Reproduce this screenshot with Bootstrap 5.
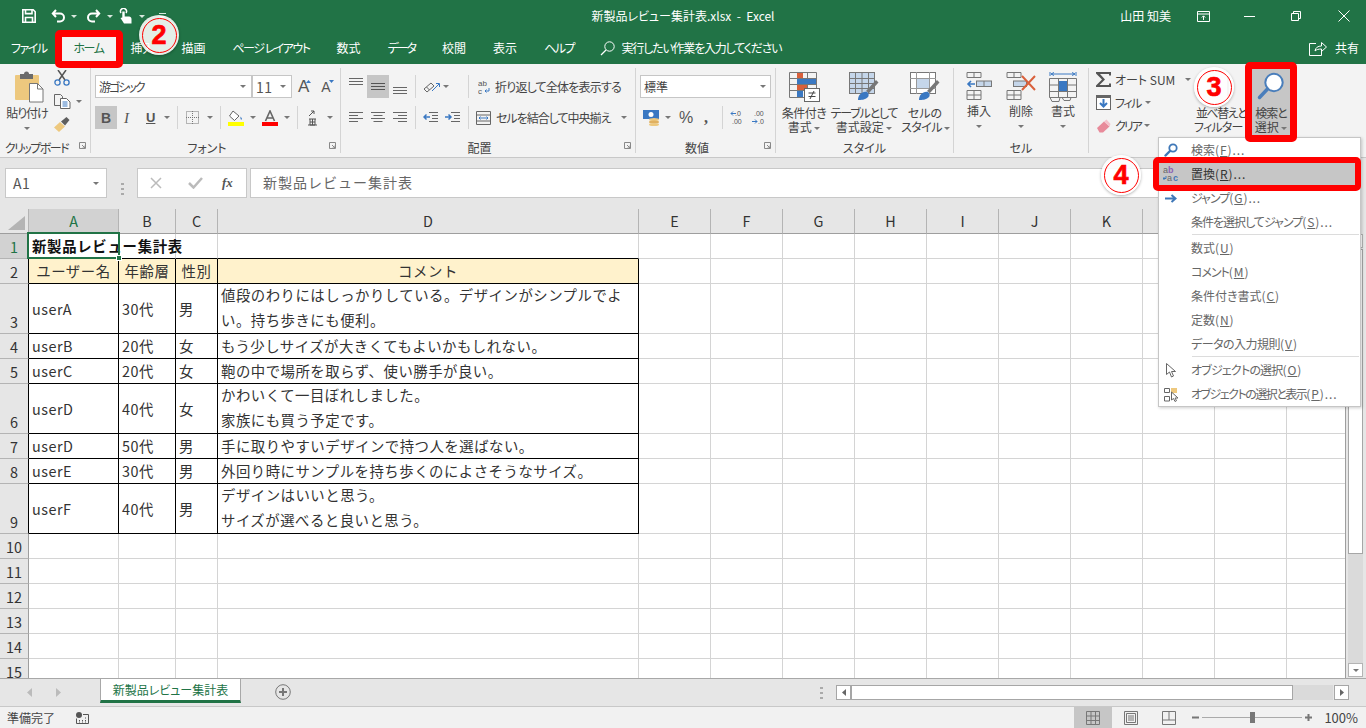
<!DOCTYPE html>
<html lang="ja">
<head>
<meta charset="utf-8">
<title>新製品レビュー集計表.xlsx - Excel</title>
<link href="https://cdn.jsdelivr.net/npm/bootstrap@5.3.0/dist/css/bootstrap.min.css" rel="stylesheet">
<style>
html,body{height:100%;margin:0;overflow:hidden;background:#e6e6e6}
body{font-family:"Noto Sans CJK JP","Liberation Sans",sans-serif}
.xl-app{position:relative;width:1366px;height:728px;overflow:hidden;font-size:12px;color:#444;font-feature-settings:"palt";line-height:14px;white-space:nowrap}
.xl-title{height:32px;background:#217346;color:#fff;flex:none}
.xl-tabs{height:32px;background:#217346;color:#fff;flex:none}
.xl-side{flex:1 1 0;min-width:0}
.xl-tab{padding:0 13.5px;line-height:32px;height:32px}
.xl-tab-first{padding-left:11px}
.xl-tab-on{background:#f3f3f3;color:#217346}
.ls05{letter-spacing:-.5px}.ls08{letter-spacing:-.8px}.ls1{letter-spacing:-1px}.ls12{letter-spacing:-1.2px}.ls15{letter-spacing:-1.5px}.ls2{letter-spacing:-2px}
.share-txt{margin-right:7px}
.xl-ribbon{height:94px;background:#f3f3f3;border-bottom:1px solid #c8c8c8;padding-top:4px;flex:none}
.rgroup{height:85px;border-right:1px solid #d4d4d4;flex:none}
.rg-clip{width:91px}.rg-font{width:250px;padding-left:4px}.rg-align{width:295px;padding-left:8px}.rg-num{width:140px;padding-left:4px}.rg-style{width:178px;padding-left:5px}.rg-cell{width:135px;padding-left:4px}.rg-edit{width:260px;padding-left:7px;border:0}
.rbody{flex:1 1 0;min-height:0}
.rlabel{height:12px;line-height:12px;margin-bottom:-1px;flex:none;margin-left:-8px}
.rg-clip .rlabel{margin-left:0}.rg-font .rlabel{margin-left:-4px}.rg-num .rlabel{margin-left:-4px}.rg-style .rlabel{margin-left:-5px}.rg-cell .rlabel{margin-left:-4px}
.rlabel-txt{flex:1 1 0;text-align:center}
.launch{margin:0 4px 0 6px;flex:none}
.trow{height:23px;flex:none}
.trow1{margin-top:7px}.trow2{margin-top:8px}
.tile{width:22px;height:23px;flex:none;background:#c6c6c6}
.tsep{width:1px;height:23px;background:#d4d4d4;flex:none}
.crt{width:0;height:0;flex:none;border-left:3px solid transparent;border-right:3px solid transparent;border-top:3px solid #777;display:inline-block;vertical-align:2px}
.crt-w{border-top-color:#d8e8de}
.cbox{height:23px;background:#fff;border:1px solid #c6c6c6;flex:none;padding:0 5px 0 3px}
.cb-font{width:157px}.cb-size{width:40px}.cb-num{width:131px;padding-right:4px}
.sz-num{font-size:14px;color:#555;letter-spacing:.5px;font-feature-settings:normal}
.glyph-a{font-size:17px;line-height:20px;color:#555;font-family:"Liberation Sans",sans-serif}
.glyph-a2{font-size:14px;line-height:20px;color:#555;font-family:"Liberation Sans",sans-serif}
.tri-up{margin:-11px 0 0 -3px;flex:none}
.tri-dn{margin:-11px 0 0 -2px;flex:none}
.glyph-b{font-weight:700;font-size:14px;color:#555;font-family:"Liberation Sans",sans-serif}
.glyph-i{font-style:italic;font-size:15px;color:#555;font-family:"Liberation Serif",serif;width:7px}
.glyph-u{font-weight:700;font-size:13px;color:#555;text-decoration:underline;width:8px;font-family:"Liberation Sans",sans-serif}
.glyph-pct{font-size:16px;color:#555;width:13px;font-family:"Liberation Sans",sans-serif}
.glyph-com{font-size:16px;font-weight:700;color:#555;width:4px;font-family:"Liberation Serif",serif}
.al-top{margin-bottom:9px}.al-bot{margin-top:9px}
.merge-txt{width:116px;flex:none}
.paste-col{width:54px;flex:none;text-align:center;padding-top:3px}
.paste-ico{display:block;margin:0 0 3px 15px}
.tool-col{padding-top:2px}
.copy-row{margin-top:8px}
.brush-ico{margin-top:8px}
.bigbtn{flex:none;text-align:center;padding-top:4px}
.bb-1{width:46px}.bb-2{width:74px}.bb-3{width:48px}.bb-c{width:42px}.bb-sort{width:54px}.bb-find{width:38px;height:67px;background:#c6c6c6;margin-left:4px}
.bigbtn svg{display:block;margin:0 auto 4px}
.bigbtn .svg-tall{margin-bottom:2px}
.bb-find svg{margin-bottom:6px}
.crtline{line-height:14px;height:14px}
.editcol{width:98px;flex:none}
.erow{height:23px}
.l1{margin-left:1px}.l3{margin-left:3px}.l4{margin-left:4px}.l5{margin-left:5px}.l6{margin-left:6px}.l7{margin-left:7px}.l8{margin-left:8px}.l9{margin-left:9px}.l10{margin-left:10px}.l12{margin-left:12px}.l14{margin-left:14px}.l15{margin-left:15px}.l19{margin-left:19px}.l22{margin-left:22px}.l26{margin-left:26px}.l34{margin-left:34px}.l36{margin-left:36px}.l37{margin-left:37px}
.xl-fbar{height:51px;background:#e6e6e6;padding:10px 0 0 5px;flex:none}
.fbox{height:30px;background:#fff;border:1px solid #c8c8c8;flex:none}
.fb-name{width:102px;padding:0 7px;font-size:14px;color:#555;letter-spacing:.6px;font-feature-settings:normal}
.fb-dots{width:30px}
.fb-btn{width:110px;padding-left:12px}
.fb-input{width:1102px;margin-left:3px;padding:0 0 3px 12px;font-size:14px;letter-spacing:1px;color:#666;font-feature-settings:normal}
.fxt{font-family:"Liberation Serif",serif;font-style:italic;font-weight:700;font-size:13px;color:#555}
.xl-grid{flex:1 1 0;min-height:0}
.sheetwrap{width:1345px;flex:none;overflow:hidden;background:#fff;position:relative}
.xl-sheet{table-layout:fixed;width:1359px;border-collapse:separate;border-spacing:0;--bs-table-bg:transparent;font-size:14.4px;color:#333;font-feature-settings:normal;line-height:23px;letter-spacing:.5px}
.xl-sheet td,.xl-sheet th{padding:0 3px 1px;border:0;border-right:1px solid #d4d4d4;border-bottom:1px solid #d4d4d4;white-space:nowrap;font-weight:400;box-shadow:none;vertical-align:middle}
.twoln{line-height:25px;margin:-3px 0 -1px}
.c-rh{width:29px}.c-a{width:90px}.c-b{width:57px}.c-c{width:42px}.c-d{width:421px}.c-x{width:72px}
.rh-s{height:25px}.rh-d{height:50px}.rh-h{height:25px}
.xl-sheet th.hd{background:#e6e6e6;border-right:1px solid #b4b4b4;border-bottom:1px solid #9e9e9e;text-align:center;color:#333;padding:0;letter-spacing:0;line-height:24px;height:25px}
.corner-ico{display:block}
.xl-sheet th.rn{background:#e6e6e6;border-right:1px solid #9e9e9e;border-bottom:1px solid #b4b4b4;text-align:center;color:#333;padding:0;letter-spacing:0;vertical-align:bottom;line-height:23px}
.xl-sheet th.sel{background:#d2d2d2;color:#217346}
.xl-sheet th.rn-b{border-right-color:#000}
.xl-sheet td.bx{border-right-color:#000;border-bottom-color:#000}
.xl-sheet td.hdr{background:#fff2cc;text-align:center;letter-spacing:.6px}
.xl-sheet td.ttl{font-weight:700;position:relative;padding-left:3px;border-bottom-color:#000;border-right-color:transparent;letter-spacing:.7px;color:#111}
.xl-sheet td.bbk{border-bottom-color:#000}
.sel-box{position:absolute;left:-2px;top:-2px;width:93px;height:27px;border:2px solid #217346;pointer-events:none}
.sel-hdl{position:absolute;right:-4px;bottom:-4px;width:6px;height:6px;background:#217346;border:1px solid #fff}
.vbar{width:21px;flex:none;background:#e6e6e6;border-left:1px solid #9e9e9e;padding:25px 3px 1px 2px}
.vbtn{height:14px;background:#fff;border:1px solid #b4b4b4;flex:none}
.vthumb{height:305px;background:#fff;border:1px solid #a6a6a6;flex:none;margin-top:1px}
.vtrack{flex:1 1 0;background:#dadada}
.xl-sheetbar{height:28px;background:#e6e6e6;border-top:1px solid #a8a8a8;flex:none}
.sheet-arrows{width:100px;padding-left:27px;flex:none}
.arrow-next{margin-left:24px}
.sheet-tab{width:141px;height:25px;margin-top:-1px;background:#fff;border:1px solid #a8a8a8;border-bottom:3px solid #217346;text-align:center;line-height:21px;color:#217346;flex:none}
.plus-slot{margin-left:34px;flex:none;margin-top:-1px}
.dots-slot{margin-left:529px;flex:none}
.hbar{margin-left:13px;flex:none}
.hbtn{width:15px;height:15px;background:#fff;border:1px solid #a6a6a6;flex:none}
.hthumb{width:442px;height:15px;background:#fff;border:1px solid #a6a6a6;flex:none}
.htrack{width:40px;height:15px;background:#dadada;flex:none}
.xl-status{height:22px;background:#f1f1f1;border-top:1px solid #c8c8c8;flex:none;padding-left:7px}
.status-ico{margin-left:21px}
.zoom-ico{margin-left:4px}
.st-active{width:38px;height:21px;background:#c6c6c6;flex:none}
.st-view{width:38px;height:21px;flex:none}
.st-pct{font-size:13px;color:#444;margin-left:12px;font-feature-settings:normal}
.find-menu.dropdown-menu{position:absolute;left:1158px;top:137px;width:203px;height:270px;padding:0;margin:0;min-width:0;border:1px solid #c6c6c6;border-radius:0;background:#fff;box-shadow:1px 1px 3px rgba(0,0,0,.2);font-size:12px;z-index:5}
.find-item{display:flex;align-items:center;height:24px;padding:0;color:#666;font-size:12px;line-height:24px}
.find-item.on{background:#c6c6c6;color:#333}
.find-ico{width:24px;flex:none;display:flex;justify-content:center;align-items:center;margin-right:8px}
.find-acc{letter-spacing:.9px}
.find-sep{height:2px;margin:0 1px 0 33px;border-top:1px solid #dcdcdc;opacity:1}
.red-mark{position:absolute;border:7px solid #f00;border-radius:5px;z-index:6;pointer-events:none}
.rm-home{left:55px;top:30px;width:68px;height:38px}
.rm-find{left:1245px;top:62px;width:52px;height:80px}
.rm-repl{left:1153px;top:157px;width:208px;height:34px;border-width:6px}
.step-mark{position:absolute;width:40px;height:40px;background:rgba(255,255,255,.88);box-shadow:0 1px 3px rgba(0,0,0,.3);z-index:7}
.step-ring{width:35px;height:35px;border:1.5px solid #f00;color:#f00;font:700 27px/1 "Liberation Sans",sans-serif;-webkit-text-stroke:.7px #f00}
.sm-2{left:139px;top:15px}.sm-3{left:1194px;top:67px}.sm-4{left:1101px;top:155px}
</style>
</head>
<body>
<div class="xl-app d-flex flex-column">

  <div class="xl-title d-flex align-items-center">
    <div class="xl-side d-flex align-items-center">
      <svg class="l22" width="14" height="14" viewBox="0 0 14 14" fill="none" stroke="#fff"><path stroke-width="1.6" d="M.8.8h10.400l2 2v10.400H.8z"/><path stroke-width="1.6" d="M3.500 1v3.600h6.500V1M3.500 13V8.500h7V13"/></svg>
      <svg class="l15" width="15" height="14" viewBox="0 0 15 14" fill="none" stroke="#fff" stroke-width="2"><path d="M5 1 1.800 4.500 5 8M2 4.500h7a4 4 0 0 1 0 8H6"/></svg>
      <span class="crt crt-w l5"></span>
      <svg class="l9" width="15" height="14" viewBox="0 0 15 14" fill="none" stroke="#fff" stroke-width="2"><path d="M10 1l3.200 3.500L10 8M13 4.500H6a4 4 0 0 0 0 8h3"/></svg>
      <span class="crt crt-w l6"></span>
      <svg class="l6" width="13" height="16" viewBox="0 0 13 16"><path fill="none" stroke="#fff" stroke-width="1.500" d="M2 5a3 3 0 1 1 5 0"/><path fill="#fff" d="M3.300 3.500h2.400v5H10c1.500 0 2.500 1 2.500 2.500v4.500H5L1.500 10l1.800-.5z"/></svg>
      <span class="crt crt-w l7"></span>
      <svg class="l14" width="7" height="6" viewBox="0 0 7 6"><path stroke="#d8e8de" d="M0 .5h7"/><path fill="#d8e8de" d="M0 3h7L3.500 6z"/></svg>
    </div>
    <div class="flex-shrink-0 text-white">新製品レビュー集計表.xlsx&nbsp; - &nbsp;Excel</div>
    <div class="xl-side d-flex align-items-center justify-content-end">
      <span class="text-white">山田 知美</span>
      <svg class="l26" width="13" height="11" viewBox="0 0 13 11" fill="none" stroke="#fff"><path d="M.5.500h12v10H.5zM.5 3h12M6.500 9V5M4.800 6.500l1.700-1.700 1.700 1.700"/></svg>
      <svg class="l34" width="11" height="1" viewBox="0 0 11 1"><path stroke="#fff" d="M0 .5h11"/></svg>
      <svg class="l36" width="10" height="10" viewBox="0 0 10 10" fill="none" stroke="#fff"><path d="M.5 2.500h7v7h-7zM2.500 2.500v-2h7v7h-2"/></svg>
      <svg class="l37 me-3" width="12" height="12" viewBox="0 0 12 12" stroke="#fff"><path d="M.5.500l11 11M11.500.5l-11 11"/></svg>
    </div>
  </div>

  <div class="xl-tabs d-flex align-items-center">
    <div class="xl-tab xl-tab-first ls15">ファイル</div>
    <div class="xl-tab xl-tab-on ls15">ホーム</div>
    <div class="xl-tab">挿入</div>
    <div class="xl-tab">描画</div>
    <div class="xl-tab ls15">ページ レイアウト</div>
    <div class="xl-tab">数式</div>
    <div class="xl-tab ls2">データ</div>
    <div class="xl-tab">校閲</div>
    <div class="xl-tab">表示</div>
    <div class="xl-tab ls15">ヘルプ</div>
    <svg class="l12" width="15" height="15" viewBox="0 0 15 15" fill="none" stroke="#fff"><circle cx="9.500" cy="5.500" r="4.700"/><path stroke-width="1.300" d="M6 9 1 14"/></svg>
    <span class="l7 ls12">実行したい作業を入力してください</span>
    <div class="xl-side d-flex justify-content-end align-items-center">
      <svg width="18" height="15" viewBox="0 0 18 15" fill="none" stroke="#fff"><path d="M7 2.500H.5v12h12V10M6 10c.5-3.500 3-5 6.500-5V1.500L17.500 6l-5 4.500V8C9.500 8 7.500 8.500 6 10z"/></svg>
      <span class="l8 share-txt">共有</span>
    </div>
  </div>

  <div class="xl-ribbon d-flex">
    <!-- clipboard -->
    <div class="rgroup rg-clip d-flex flex-column">
      <div class="rbody d-flex">
        <div class="paste-col">
          <svg class="paste-ico" width="29" height="32" viewBox="0 0 29 32"><rect y="4" width="24" height="25" rx="1" fill="#edc87e"/><rect x="5" y="3" width="13" height="5" fill="#6b6b6b"/><circle cx="11.500" cy="3" r="2.500" fill="#6b6b6b"/><path d="M14.500 12.500h8l5.500 5.500v13H14.500z" fill="#fff" stroke="#777"/><path d="M22.500 12.500V18H28" fill="none" stroke="#777"/></svg>
          <div class="ls1">貼り付け</div>
          <div class="crtline"><span class="crt"></span></div>
        </div>
        <div class="d-flex flex-column tool-col">
          <svg width="16" height="16" viewBox="0 0 16 16" fill="none"><path stroke="#555" stroke-width="1.500" d="M4 0l7 10M12 0 5 10"/><circle cx="3.500" cy="12.500" r="2.600" stroke="#3a78c2" stroke-width="1.300"/><circle cx="12.500" cy="12.500" r="2.600" stroke="#3a78c2" stroke-width="1.300"/></svg>
          <div class="d-flex align-items-center copy-row">
            <svg width="17" height="15" viewBox="0 0 17 15" fill="none" stroke="#666"><path d="M.5.500h6l2 2v9H.500z" fill="#f3f3f3"/><path d="M6.500 4.500h6l3.500 3.500v6.500H6.500z" fill="#fff"/><path stroke="#3a78c2" d="M8.500 8h5M8.500 10h5M8.500 12h5"/></svg>
            <span class="crt l5"></span>
          </div>
          <svg class="brush-ico" width="16" height="15" viewBox="0 0 16 15"><path fill="#edc87e" d="M0 10.500 6 5l5 4.500L5 15z"/><path fill="#5e5e5e" d="M7 4.500 12.500 0 15.500 3 11 8.500z"/></svg>
        </div>
      </div>
      <div class="rlabel d-flex"><span class="rlabel-txt ls15">クリップボード</span><svg class="launch" width="7" height="7" viewBox="0 0 7 7" fill="none" stroke="#888"><path d="M.5 6.500v-6h6v6zM3 3l3 3M6 3.500V6H3.500"/></svg></div>
    </div>
    <!-- font -->
    <div class="rgroup rg-font d-flex flex-column">
      <div class="rbody">
        <div class="trow trow1 d-flex align-items-center">
          <div class="cbox cb-font d-flex align-items-center justify-content-between"><span class="ls2">游ゴシック</span><span class="crt"></span></div>
          <div class="cbox cb-size d-flex align-items-center justify-content-between"><span class="sz-num">11</span><span class="crt"></span></div>
          <span class="glyph-a l6">A</span>
          <svg class="tri-up" width="5" height="3" viewBox="0 0 5 3"><path fill="#3a78c2" d="M2.500 0 5 3H0z"/></svg>
          <span class="glyph-a2 l10">A</span>
          <svg class="tri-dn" width="5" height="3" viewBox="0 0 5 3"><path fill="#3a78c2" d="M0 0h5L2.500 3z"/></svg>
        </div>
        <div class="trow trow2 d-flex align-items-center">
          <div class="tile d-flex align-items-center justify-content-center"><span class="glyph-b">B</span></div>
          <span class="glyph-i l7">I</span>
          <span class="glyph-u l15">U</span>
          <span class="crt l10"></span>
          <span class="tsep l7"></span>
          <svg class="l8" width="13" height="13" viewBox="0 0 13 13" fill="none" stroke="#777" stroke-dasharray="1 1"><path d="M.5.500h12v12H.5zM6.500 0v13M0 6.500h13"/></svg>
          <span class="crt l8"></span>
          <span class="tsep l7"></span>
          <svg class="l7" width="16" height="16" viewBox="0 0 16 16"><path d="M5 1 1.500 6 6.500 10.500 11 6z" fill="#fff" stroke="#666"/><path d="M12.500 6.500c1.200 1.500 1.800 2.400 1.200 3-.7.500-1.500-.2-1.200-3z" fill="#3a78c2"/><rect y="12" width="16" height="4" fill="#ffff00"/></svg>
          <span class="crt l6"></span>
          <svg class="l6" width="16" height="16" viewBox="0 0 16 16"><path d="M3.500 11 8 1l4.500 10M5 8h6" fill="none" stroke="#666" stroke-width="1.600"/><rect y="12" width="16" height="4" fill="#f00"/></svg>
          <span class="crt l6"></span>
          <span class="tsep l7"></span>
          <svg class="l10" width="9" height="16" viewBox="0 0 9 16" fill="none" stroke="#555"><path d="M1 6 6 1M3 1h3v3M1 9h7M2 9v6h5V9M2 12h5M4.500 9v6M0 15h9"/></svg>
          <span class="crt l10"></span>
        </div>
      </div>
      <div class="rlabel d-flex"><span class="rlabel-txt">フォント</span><svg class="launch" width="7" height="7" viewBox="0 0 7 7" fill="none" stroke="#888"><path d="M.5 6.500v-6h6v6zM3 3l3 3M6 3.500V6H3.500"/></svg></div>
    </div>
    <!-- align -->
    <div class="rgroup rg-align d-flex flex-column">
      <div class="rbody">
        <div class="trow trow1 d-flex align-items-center">
          <svg class="al-top" width="14" height="8" viewBox="0 0 14 8" stroke="#666"><path d="M0 .5h14M0 3.500h14M0 6.500h14"/></svg>
          <div class="tile l4 d-flex align-items-center justify-content-center"><svg width="14" height="7" viewBox="0 0 14 7" stroke="#555"><path d="M0 .5h14M0 3.500h14M0 6.500h14"/></svg></div>
          <svg class="l4 al-bot" width="14" height="8" viewBox="0 0 14 8" stroke="#666"><path d="M0 .5h14M0 3.500h14M0 6.500h14"/></svg>
          <span class="tsep l8"></span>
          <svg class="l7" width="17" height="14" viewBox="0 0 17 14" fill="none" stroke="#666"><path d="M1 9l7-6 3 3-7 6zM3.500 7l3 3"/><path stroke="#3a78c2" d="M9 11l7-7M13 3.500h3.500V7"/></svg>
          <span class="crt l3"></span>
          <span class="tsep l19"></span>
          <svg class="l9" width="12" height="14" viewBox="0 0 12 14"><text x="0" y="6" font-size="8" fill="#555" font-family="Liberation Sans">ab</text><text x="0" y="14" font-size="8" fill="#555" font-family="Liberation Sans">c</text><path d="M11 8v3H7M8.500 9.500 7 11l1.500 1.500" fill="none" stroke="#3a78c2"/></svg>
          <span class="l5 ls08">折り返して全体を表示する</span>
        </div>
        <div class="trow trow2 d-flex align-items-center">
          <svg width="14" height="11" viewBox="0 0 14 11" stroke="#666"><path d="M0 .5h14M0 3.500h9M0 6.500h14M0 9.500h9"/></svg>
          <svg class="l8" width="14" height="11" viewBox="0 0 14 11" stroke="#666"><path d="M0 .5h14M2.500 3.500h9M0 6.500h14M2.500 9.500h9"/></svg>
          <svg class="l8" width="14" height="11" viewBox="0 0 14 11" stroke="#666"><path d="M0 .5h14M5 3.500h9M0 6.500h14M5 9.500h9"/></svg>
          <span class="tsep l8"></span>
          <svg class="l7" width="15" height="11" viewBox="0 0 15 11" stroke="#666" fill="none"><path d="M6 .5h9M9 3.500h6M9 6.500h6M6 9.500h9"/><path stroke="#3a78c2" stroke-width="1.500" d="M7 5H1M3.500 2.500 1 5l2.500 2.500"/></svg>
          <svg class="l7" width="15" height="11" viewBox="0 0 15 11" stroke="#666" fill="none"><path d="M6 .5h9M9 3.500h6M9 6.500h6M6 9.500h9"/><path stroke="#3a78c2" stroke-width="1.500" d="M0 5h6M3.500 2.500 6 5 3.500 7.500"/></svg>
          <span class="tsep l8"></span>
          <svg class="l7" width="15" height="14" viewBox="0 0 15 14" fill="none" stroke="#666"><path d="M.5.500h14v13H.5zM0 4h15M0 10h15"/><path stroke="#3a78c2" d="M3 7h9M4.500 5.500 3 7l1.500 1.500M10.500 5.500 12 7l-1.500 1.500"/></svg>
          <span class="l5 merge-txt ls1">セルを結合して中央揃え</span>
          <span class="crt l9"></span>
        </div>
      </div>
      <div class="rlabel d-flex"><span class="rlabel-txt">配置</span><svg class="launch" width="7" height="7" viewBox="0 0 7 7" fill="none" stroke="#888"><path d="M.5 6.500v-6h6v6zM3 3l3 3M6 3.500V6H3.500"/></svg></div>
    </div>
    <!-- number -->
    <div class="rgroup rg-num d-flex flex-column">
      <div class="rbody">
        <div class="trow trow1 d-flex">
          <div class="cbox cb-num d-flex align-items-center justify-content-between"><span>標準</span><span class="crt"></span></div>
        </div>
        <div class="trow trow2 d-flex align-items-center">
          <svg class="l3" width="17" height="16" viewBox="0 0 17 16"><rect width="16" height="9" fill="#3a78c2"/><circle cx="8" cy="4.500" r="2.500" fill="#fff"/><ellipse cx="11" cy="9.500" rx="5" ry="1.500" fill="#edc87e"/><ellipse cx="11" cy="12" rx="5" ry="1.500" fill="#e0b060"/><ellipse cx="11" cy="14.500" rx="5" ry="1.500" fill="#edc87e"/></svg>
          <span class="crt l5"></span>
          <span class="glyph-pct l8">%</span>
          <span class="glyph-com l12">,</span>
          <span class="tsep l14"></span>
          <svg class="l7" width="14" height="15" viewBox="0 0 14 15"><text x="5" y="6" font-size="7" fill="#555" font-family="Liberation Sans">.0</text><text x="2" y="14" font-size="7" fill="#555" font-family="Liberation Sans">.00</text><path stroke="#3a78c2" fill="none" d="M6 3.500H1M3 1.500l-2 2 2 2"/></svg>
          <svg class="l8" width="14" height="15" viewBox="0 0 14 15"><text x="2" y="6" font-size="7" fill="#555" font-family="Liberation Sans">.00</text><text x="6" y="14" font-size="7" fill="#555" font-family="Liberation Sans">.0</text><path stroke="#3a78c2" fill="none" d="M0 11.500h5M3 9.500l2 2-2 2"/></svg>
        </div>
      </div>
      <div class="rlabel d-flex"><span class="rlabel-txt">数値</span><svg class="launch" width="7" height="7" viewBox="0 0 7 7" fill="none" stroke="#888"><path d="M.5 6.500v-6h6v6zM3 3l3 3M6 3.500V6H3.500"/></svg></div>
    </div>
    <!-- styles -->
    <div class="rgroup rg-style d-flex flex-column">
      <div class="rbody d-flex">
        <div class="bigbtn bb-1">
          <svg width="31" height="30" viewBox="0 0 31 30" fill="none"><path stroke="#777" d="M.5.500h27v25H.5zM0 6.500h28M0 12.500h28M0 18.500h28M8.500 0v26M18.500 0v26"/><rect x="8" y="1" width="6" height="5" fill="#d9603b"/><rect x="8" y="7" width="19" height="5" fill="#3a78c2"/><rect x="8" y="13" width="10" height="5" fill="#d9603b"/><rect x="8" y="19" width="6" height="6" fill="#3a78c2"/><rect x="15.500" y="16.500" width="15" height="13" fill="#fff" stroke="#666"/><path stroke="#444" d="M19.500 21h7M19.500 24.500h7M25 19l-4 8"/></svg>
          <div class="ls05">条件付き</div>
          <div class="crtline">書式 <span class="crt"></span></div>
        </div>
        <div class="bigbtn bb-2">
          <svg width="30" height="30" viewBox="0 0 30 30" fill="none"><rect x=".5" y=".5" width="25" height="21" fill="#c5d6ea" stroke="#777"/><path stroke="#777" d="M0 6.500h26M0 11.500h26M0 16.500h26M6.500 0v22M13 0v22M19.500 0v22"/><path d="M17 19 27 8l2.500 2.500L20 21z" fill="#777"/><path d="M9 28c0-5 4-9 9-8 2 1 2 4 1 5-3 3-7 3-10 3z" fill="#3a78c2"/></svg>
          <div class="ls12">テーブルとして</div>
          <div class="crtline">書式設定 <span class="crt"></span></div>
        </div>
        <div class="bigbtn bb-3">
          <svg width="30" height="30" viewBox="0 0 30 30" fill="none"><rect x=".5" y=".5" width="25" height="21" fill="#fff" stroke="#777"/><path stroke="#999" d="M0 6.500h26M0 16.500h26M6.500 0v22M19.500 0v22"/><rect x="7" y="7" width="12" height="9" fill="#c5d6ea"/><path d="M17 19 27 8l2.500 2.500L20 21z" fill="#777"/><path d="M9 28c0-5 4-9 9-8 2 1 2 4 1 5-3 3-7 3-10 3z" fill="#3a78c2"/></svg>
          <div>セルの</div>
          <div class="crtline ls05">スタイル <span class="crt"></span></div>
        </div>
      </div>
      <div class="rlabel d-flex"><span class="rlabel-txt">スタイル</span></div>
    </div>
    <!-- cells -->
    <div class="rgroup rg-cell d-flex flex-column">
      <div class="rbody d-flex">
        <div class="bigbtn bb-c">
          <svg width="26" height="28" viewBox="0 0 26 28" fill="none" stroke="#777"><path d="M1 .5h14v5H1zM8 0v6M1 18.500h14v9H1zM8 18v10M1 23h14"/><rect x="10.500" y="9" width="15" height="5.500" fill="#c5d6ea"/><path d="M18 9v6"/><path stroke="#3a78c2" stroke-width="1.600" d="M9 12H2M5 9l-3 3 3 3"/></svg>
          <div>挿入</div>
          <div class="crtline"><span class="crt"></span></div>
        </div>
        <div class="bigbtn bb-c">
          <svg width="30" height="28" viewBox="0 0 30 28" fill="none" stroke="#777"><path d="M1 .5h14v5H1zM8 0v6M1 18.500h14v9H1zM8 18v10M1 23h14"/><rect x="7.500" y="9" width="13" height="5.500" fill="#c5d6ea"/><path stroke="#d9603b" stroke-width="2" d="M16 4l13 14M29 4 16 18"/></svg>
          <div>削除</div>
          <div class="crtline"><span class="crt"></span></div>
        </div>
        <div class="bigbtn bb-c">
          <svg class="svg-tall" width="28" height="30" viewBox="0 0 28 30" fill="none" stroke="#777"><path stroke="#3a78c2" d="M1 0v4M27 0v4M2 2h24M5 .5 2 2l3 1.500M23 .5 26 2l-3 1.500"/><path d="M.5 6.500h27v19H.5zM0 13h28M0 19.500h28M9.500 6v20M18.500 6v20"/><rect x="10" y="9" width="8" height="10" fill="#3a78c2" stroke="none"/><path d="M1 25.500l2 4h7l1-4M13 25.500l2 3h6l1-3"/></svg>
          <div>書式</div>
          <div class="crtline"><span class="crt"></span></div>
        </div>
      </div>
      <div class="rlabel d-flex"><span class="rlabel-txt">セル</span></div>
    </div>
    <!-- edit -->
    <div class="rgroup rg-edit d-flex">
      <div class="editcol">
        <div class="erow d-flex align-items-center"><svg width="16" height="15" viewBox="0 0 16 15"><path fill="#555" d="M0 0h15v3.500h-2V2H4l5 5.500L3.500 13H13v-1.500h2V15H0v-1.500L6 7.500 0 1.500z"/></svg><span class="l3">オート SUM</span><span class="crt l10"></span></div>
        <div class="erow d-flex align-items-center"><svg width="16" height="15" viewBox="0 0 16 15" fill="none"><rect x=".5" y=".5" width="14" height="14" fill="#fff" stroke="#666"/><rect width="15" height="3" fill="#666"/><path stroke="#3a78c2" stroke-width="2" d="M7.500 4v7M4 8l3.500 3.500L11 8"/></svg><span class="l3 ls15">フィル</span><span class="crt l4"></span></div>
        <div class="erow d-flex align-items-center"><svg width="16" height="14" viewBox="0 0 16 14"><path fill="#e88a9a" d="M1 9 8 2.500 13.500 7.500 7 13.500H3.500z"/><path fill="#f4c1cb" d="M8 2.500 10.500.5 14.500 5l-1 2.500z"/></svg><span class="l3 ls2">クリア</span><span class="crt l3"></span></div>
      </div>
      <div class="bigbtn bb-sort">
        <svg width="26" height="30" viewBox="0 0 26 30" fill="none" stroke="#777"><path d="M3 4v20M20 24V4"/></svg>
        <div class="ls15">並べ替えと</div>
        <div class="crtline"><span class="ls08">フィルター</span> <span class="crt"></span></div>
      </div>
      <div class="bigbtn bb-find">
        <svg width="28" height="28" viewBox="0 0 28 28" fill="none"><circle cx="17" cy="10.500" r="8.700" fill="#fff" stroke="#4a7ebb" stroke-width="2"/><path stroke="#4a7ebb" stroke-width="3.500" stroke-linecap="round" d="M10.500 17 2.500 25.500"/></svg>
        <div class="ls1">検索と</div>
        <div class="crtline">選択 <span class="crt"></span></div>
      </div>
    </div>
  </div>

  <div class="xl-fbar d-flex">
    <div class="fbox fb-name d-flex align-items-center justify-content-between"><span>A1</span><span class="crt"></span></div>
    <div class="fb-dots d-flex align-items-center justify-content-center"><svg width="3" height="12" viewBox="0 0 3 12" fill="#aaa"><rect width="3" height="2"/><rect y="5" width="3" height="2"/><rect y="10" width="3" height="2"/></svg></div>
    <div class="fbox fb-btn d-flex align-items-center">
      <svg width="12" height="12" viewBox="0 0 12 12" stroke="#bbb" stroke-width="1.500"><path d="M1 1l10 10M11 1 1 11"/></svg>
      <svg class="l26" width="15" height="12" viewBox="0 0 15 12" fill="none" stroke="#bbb" stroke-width="2.500"><path d="M1 6l4.500 4.500L14 1"/></svg>
      <span class="fxt l19">fx</span>
    </div>
    <div class="fbox fb-input d-flex align-items-center">新製品レビュー集計表</div>
  </div>

  <div class="xl-grid d-flex">
    <div class="sheetwrap">
      <table class="table mb-0 xl-sheet">
        <colgroup><col class="c-rh"><col class="c-a"><col class="c-b"><col class="c-c"><col class="c-d"><col class="c-x"><col class="c-x"><col class="c-x"><col class="c-x"><col class="c-x"><col class="c-x"><col class="c-x"><col class="c-x"><col class="c-x"><col class="c-x"></colgroup>
        <thead>
          <tr class="rh-h"><th class="hd"><svg class="corner-ico" width="28" height="24" viewBox="0 0 28 24"><path fill="#b4b4b4" d="M25 7v14H8z"/></svg></th><th class="hd sel">A</th><th class="hd">B</th><th class="hd">C</th><th class="hd">D</th><th class="hd">E</th><th class="hd">F</th><th class="hd">G</th><th class="hd">H</th><th class="hd">I</th><th class="hd">J</th><th class="hd">K</th><th class="hd">L</th><th class="hd">M</th><th class="hd">N</th></tr>
        </thead>
        <tbody>
          <tr class="rh-s"><th class="rn sel">1</th><td class="ttl">新製品レビュー集計表<span class="sel-box"><span class="sel-hdl"></span></span></td><td class="bbk"></td><td class="bbk"></td><td class="bbk"></td><td></td><td></td><td></td><td></td><td></td><td></td><td></td><td></td><td></td><td></td></tr>
          <tr class="rh-s"><th class="rn rn-b">2</th><td class="bx hdr">ユーザー名</td><td class="bx hdr">年齢層</td><td class="bx hdr">性別</td><td class="bx hdr">コメント</td><td></td><td></td><td></td><td></td><td></td><td></td><td></td><td></td><td></td><td></td></tr>
          <tr class="rh-d"><th class="rn rn-b">3</th><td class="bx">userA</td><td class="bx">30代</td><td class="bx">男</td><td class="bx"><div class="twoln">値段のわりにはしっかりしている。デザインがシンプルでよ<br>い。持ち歩きにも便利。</div></td><td></td><td></td><td></td><td></td><td></td><td></td><td></td><td></td><td></td><td></td></tr>
          <tr class="rh-s"><th class="rn rn-b">4</th><td class="bx">userB</td><td class="bx">20代</td><td class="bx">女</td><td class="bx">もう少しサイズが大きくてもよいかもしれない。</td><td></td><td></td><td></td><td></td><td></td><td></td><td></td><td></td><td></td><td></td></tr>
          <tr class="rh-s"><th class="rn rn-b">5</th><td class="bx">userC</td><td class="bx">20代</td><td class="bx">女</td><td class="bx">鞄の中で場所を取らず、使い勝手が良い。</td><td></td><td></td><td></td><td></td><td></td><td></td><td></td><td></td><td></td><td></td></tr>
          <tr class="rh-d"><th class="rn rn-b">6</th><td class="bx">userD</td><td class="bx">40代</td><td class="bx">女</td><td class="bx"><div class="twoln">かわいくて一目ぼれしました。<br>家族にも買う予定です。</div></td><td></td><td></td><td></td><td></td><td></td><td></td><td></td><td></td><td></td><td></td></tr>
          <tr class="rh-s"><th class="rn rn-b">7</th><td class="bx">userD</td><td class="bx">50代</td><td class="bx">男</td><td class="bx">手に取りやすいデザインで持つ人を選ばない。</td><td></td><td></td><td></td><td></td><td></td><td></td><td></td><td></td><td></td><td></td></tr>
          <tr class="rh-s"><th class="rn rn-b">8</th><td class="bx">userE</td><td class="bx">30代</td><td class="bx">男</td><td class="bx">外回り時にサンプルを持ち歩くのによさそうなサイズ。</td><td></td><td></td><td></td><td></td><td></td><td></td><td></td><td></td><td></td><td></td></tr>
          <tr class="rh-d"><th class="rn rn-b">9</th><td class="bx">userF</td><td class="bx">40代</td><td class="bx">男</td><td class="bx"><div class="twoln">デザインはいいと思う。<br>サイズが選べると良いと思う。</div></td><td></td><td></td><td></td><td></td><td></td><td></td><td></td><td></td><td></td><td></td></tr>
          <tr class="rh-s"><th class="rn">10</th><td></td><td></td><td></td><td></td><td></td><td></td><td></td><td></td><td></td><td></td><td></td><td></td><td></td><td></td></tr>
          <tr class="rh-s"><th class="rn">11</th><td></td><td></td><td></td><td></td><td></td><td></td><td></td><td></td><td></td><td></td><td></td><td></td><td></td><td></td></tr>
          <tr class="rh-s"><th class="rn">12</th><td></td><td></td><td></td><td></td><td></td><td></td><td></td><td></td><td></td><td></td><td></td><td></td><td></td><td></td></tr>
          <tr class="rh-s"><th class="rn">13</th><td></td><td></td><td></td><td></td><td></td><td></td><td></td><td></td><td></td><td></td><td></td><td></td><td></td><td></td></tr>
          <tr class="rh-s"><th class="rn">14</th><td></td><td></td><td></td><td></td><td></td><td></td><td></td><td></td><td></td><td></td><td></td><td></td><td></td><td></td></tr>
          <tr class="rh-s"><th class="rn">15</th><td></td><td></td><td></td><td></td><td></td><td></td><td></td><td></td><td></td><td></td><td></td><td></td><td></td><td></td></tr>
        </tbody>
      </table>
    </div>
    <div class="vbar d-flex flex-column">
      <div class="vbtn"></div>
      <div class="vthumb"></div>
      <div class="vtrack"></div>
      <div class="vbtn d-flex align-items-center justify-content-center"><span class="crt"></span></div>
    </div>
  </div>

  <div class="xl-sheetbar d-flex">
    <div class="sheet-arrows d-flex align-items-center">
      <svg width="5" height="9" viewBox="0 0 5 9"><path fill="#bbb" d="M5 0v9L0 4.500z"/></svg>
      <svg class="arrow-next" width="5" height="9" viewBox="0 0 5 9"><path fill="#bbb" d="M0 0v9l5-4.500z"/></svg>
    </div>
    <div class="sheet-tab">新製品レビュー集計表</div>
    <div class="d-flex align-items-center plus-slot">
      <svg width="16" height="16" viewBox="0 0 16 16" fill="none" stroke="#777"><circle cx="8" cy="8" r="7.300"/><path stroke-width="2" d="M8 4v8M4 8h8"/></svg>
    </div>
    <div class="d-flex align-items-center dots-slot">
      <svg width="3" height="12" viewBox="0 0 3 12" fill="#aaa"><rect width="3" height="2"/><rect y="5" width="3" height="2"/><rect y="10" width="3" height="2"/></svg>
    </div>
    <div class="d-flex align-items-center hbar">
      <div class="hbtn d-flex align-items-center justify-content-center"><svg width="4" height="7" viewBox="0 0 4 7"><path fill="#666" d="M4 0v7L0 3.500z"/></svg></div>
      <div class="hthumb"></div>
      <div class="htrack"></div>
      <div class="hbtn d-flex align-items-center justify-content-center l1"><svg width="4" height="7" viewBox="0 0 4 7"><path fill="#666" d="M0 0v7l4-3.500z"/></svg></div>
    </div>
  </div>

  <div class="xl-status d-flex align-items-center">
    <span>準備完了</span>
    <svg class="status-ico" width="13" height="12" viewBox="0 0 13 12"><circle cx="3" cy="3" r="3" fill="#555"/><path fill="none" stroke="#555" d="M.5 6.500v5h12v-9H7M3 8.500h1M6 8.500h1M9 8.500h1M3 10h1M6 10h1M9 10h1M9 6h1"/></svg>
    <div class="ms-auto d-flex align-items-center">
      <div class="st-active d-flex align-items-center justify-content-center"><svg width="14" height="14" viewBox="0 0 14 14" fill="none" stroke="#777"><path d="M.5.500h13v13H.5zM5 0v14M9.500 0v14M0 5h14M0 9.500h14"/></svg></div>
      <div class="st-view d-flex align-items-center justify-content-center"><svg width="14" height="14" viewBox="0 0 14 14" fill="none" stroke="#777"><path d="M.5.500h13v13H.5zM2.500 2.500h9v9h-9zM4 5h6M4 7h6M4 9h6"/></svg></div>
      <div class="st-view d-flex align-items-center justify-content-center"><svg width="14" height="14" viewBox="0 0 14 14" fill="none" stroke="#777"><path d="M.5.500h13v13H.5zM0 9h14M7 0v9"/></svg></div>
      <svg class="zoom-ico" width="120" height="13" viewBox="0 0 120 13"><path stroke="#777" stroke-width="2" d="M0 6.500h7M113 6.500h7M116.500 3v7"/><path stroke="#aaa" d="M10 6.500h100"/><rect x="58" y="1" width="5" height="11" fill="#777"/></svg>
      <span class="st-pct me-2">100%</span>
    </div>
  </div>

  <div class="red-mark rm-home"></div>
  <div class="red-mark rm-find"></div>
  <div class="red-mark rm-repl"></div>

  <div class="step-mark sm-2 rounded-circle d-flex align-items-center justify-content-center"><div class="step-ring rounded-circle d-flex align-items-center justify-content-center">2</div></div>
  <div class="step-mark sm-3 rounded-circle d-flex align-items-center justify-content-center"><div class="step-ring rounded-circle d-flex align-items-center justify-content-center">3</div></div>
  <div class="step-mark sm-4 rounded-circle d-flex align-items-center justify-content-center"><div class="step-ring rounded-circle d-flex align-items-center justify-content-center">4</div></div>

  <div class="dropdown-menu show find-menu">
    <a class="dropdown-item find-item" href="#"><span class="find-ico"><svg width="14" height="14" viewBox="0 0 14 14" fill="none"><circle cx="9" cy="5" r="3.700" stroke="#3f78b8" stroke-width="1.800"/><path stroke="#3f78b8" stroke-width="2.400" stroke-linecap="round" d="M6 8 1.500 12.500"/></svg></span><span>検索</span><span class="find-acc">(<u>F</u>)...</span></a>
    <a class="dropdown-item find-item on" href="#"><span class="find-ico"><svg width="17" height="16" viewBox="0 0 17 16"><text x="0" y="7" font-size="9" fill="#666" font-family="Liberation Sans">a</text><text x="5" y="7" font-size="9" fill="#8a63b5" font-family="Liberation Sans" font-weight="700">b</text><path stroke="#3f78b8" fill="none" d="M3 10v2.500H0M1.500 11 0 12.500 1.500 14"/><text x="4" y="15" font-size="9" fill="#666" font-family="Liberation Sans">a</text><text x="10" y="15" font-size="9" fill="#3f78b8" font-family="Liberation Sans" font-weight="700">c</text></svg></span><span>置換</span><span class="find-acc">(<u>R</u>)...</span></a>
    <a class="dropdown-item find-item" href="#"><span class="find-ico"><svg width="12" height="9" viewBox="0 0 12 9" fill="none" stroke="#3f78b8" stroke-width="2"><path d="M0 4.500h10M6.500 1 10.500 4.500 6.500 8"/></svg></span><span class="ls1">ジャンプ</span><span class="find-acc">(<u>G</u>)...</span></a>
    <a class="dropdown-item find-item" href="#"><span class="find-ico"></span><span class="ls1">条件を選択してジャンプ</span><span class="find-acc">(<u>S</u>)...</span></a>
    <hr class="find-sep">
    <a class="dropdown-item find-item" href="#"><span class="find-ico"></span><span>数式</span><span class="find-acc">(<u>U</u>)</span></a>
    <a class="dropdown-item find-item" href="#"><span class="find-ico"></span><span class="ls1">コメント</span><span class="find-acc">(<u>M</u>)</span></a>
    <a class="dropdown-item find-item" href="#"><span class="find-ico"></span><span>条件付き書式</span><span class="find-acc">(<u>C</u>)</span></a>
    <a class="dropdown-item find-item" href="#"><span class="find-ico"></span><span>定数</span><span class="find-acc">(<u>N</u>)</span></a>
    <a class="dropdown-item find-item" href="#"><span class="find-ico"></span><span class="ls05">データの入力規則</span><span class="find-acc">(<u>V</u>)</span></a>
    <hr class="find-sep">
    <a class="dropdown-item find-item" href="#"><span class="find-ico"><svg width="10" height="15" viewBox="0 0 10 15" fill="#fff" stroke="#666"><path d="M.5.500v11l3-2.500 2 5 2-1-2-4.500h4z"/></svg></span><span class="ls08">オブジェクトの選択</span><span class="find-acc">(<u>O</u>)</span></a>
    <a class="dropdown-item find-item" href="#"><span class="find-ico"><svg width="15" height="15" viewBox="0 0 15 15" fill="none"><path stroke="#666" d="M.5 1.500h5v4h-5zM.5 9.500h5v4.500h-5z"/><rect x="7" y="1" width="6" height="5" fill="#edc87e"/><path fill="#fff" stroke="#666" d="M7.500 5v8l2-1.500 1.500 3 1.500-.8-1.500-2.700h3z"/></svg></span><span class="ls15">オブジェクトの選択と表示</span><span class="find-acc">(<u>P</u>)...</span></a>
  </div>
</div>
<script src="https://cdn.jsdelivr.net/npm/bootstrap@5.3.0/dist/js/bootstrap.bundle.min.js"></script>
</body>
</html>
